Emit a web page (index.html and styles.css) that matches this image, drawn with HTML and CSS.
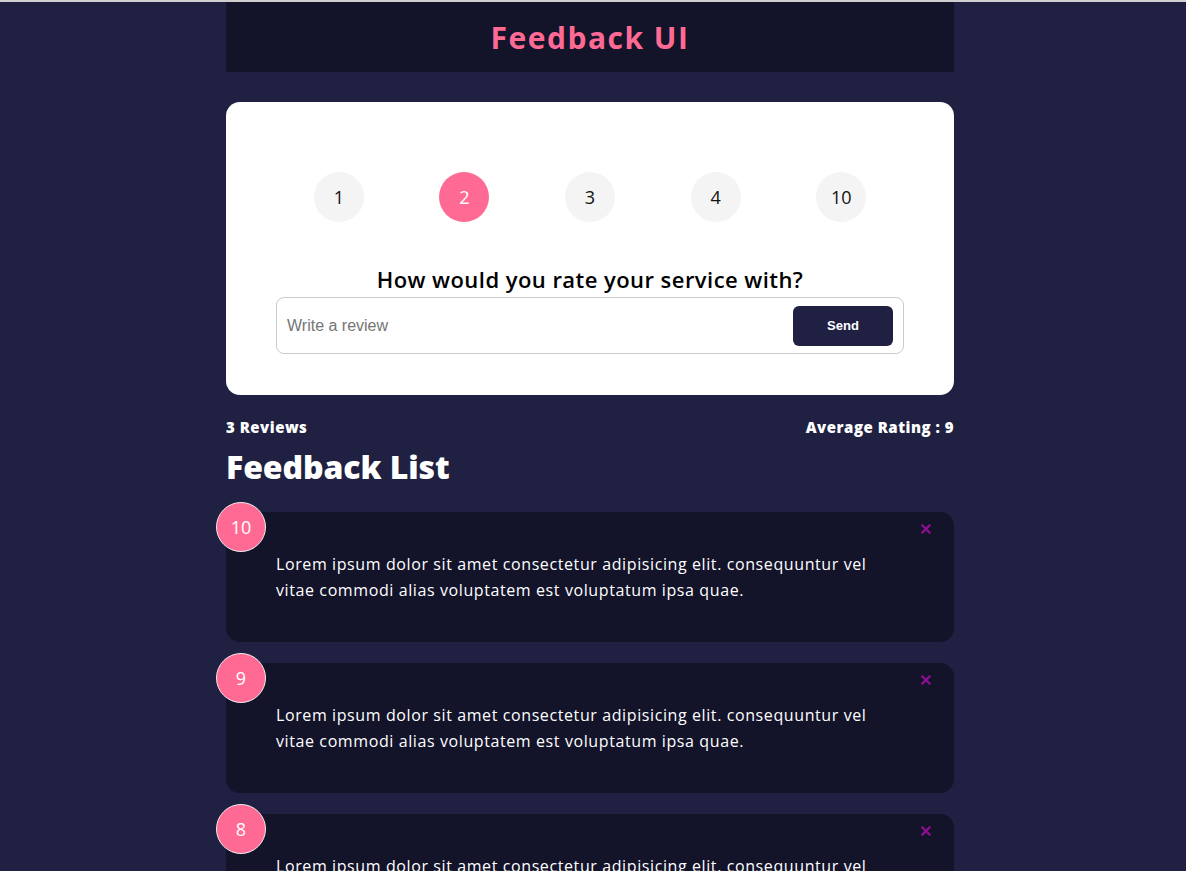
FILE: index.html
```html
<!DOCTYPE html>
<html lang="en">
<head>
<meta charset="utf-8">
<title>Feedback UI</title>
<link rel="stylesheet" href="styles.css">
</head>
<body>
<div class="page">
  <header class="header">
    <h2 class="brand">Feedback UI</h2>
  </header>
  <main class="container">
    <section class="card rating-card">
      <ul class="rating">
        <li class="rate">1</li>
        <li class="rate active">2</li>
        <li class="rate">3</li>
        <li class="rate">4</li>
        <li class="rate">10</li>
      </ul>
      <h2 class="question">How would you rate your service with?</h2>
      <div class="input-group">
        <input class="review" type="text" placeholder="Write a review">
        <button class="send" type="button">Send</button>
      </div>
    </section>

    <div class="stats">
      <h4>3 Reviews</h4>
      <h4>Average Rating : 9</h4>
    </div>
    <h1 class="list-title">Feedback List</h1>

    <div class="feedback">
      <div class="num">10</div>
      <button class="close" type="button" aria-label="delete"><svg viewBox="0 0 10 10" width="10" height="10"><path d="M1.5 1.5 L8.5 8.5 M8.5 1.5 L1.5 8.5" stroke="#8a0f8f" stroke-width="2.4" stroke-linecap="square"/></svg></button>
      <p class="text">Lorem ipsum dolor sit amet consectetur adipisicing elit. consequuntur vel vitae commodi alias voluptatem est voluptatum ipsa quae.</p>
    </div>
    <div class="feedback">
      <div class="num">9</div>
      <button class="close" type="button" aria-label="delete"><svg viewBox="0 0 10 10" width="10" height="10"><path d="M1.5 1.5 L8.5 8.5 M8.5 1.5 L1.5 8.5" stroke="#8a0f8f" stroke-width="2.4" stroke-linecap="square"/></svg></button>
      <p class="text">Lorem ipsum dolor sit amet consectetur adipisicing elit. consequuntur vel vitae commodi alias voluptatem est voluptatum ipsa quae.</p>
    </div>
    <div class="feedback">
      <div class="num">8</div>
      <button class="close" type="button" aria-label="delete"><svg viewBox="0 0 10 10" width="10" height="10"><path d="M1.5 1.5 L8.5 8.5 M8.5 1.5 L1.5 8.5" stroke="#8a0f8f" stroke-width="2.4" stroke-linecap="square"/></svg></button>
      <p class="text">Lorem ipsum dolor sit amet consectetur adipisicing elit. consequuntur vel vitae commodi alias voluptatem est voluptatum ipsa quae.</p>
    </div>
  </main>
</div>
</body>
</html>
```

FILE: styles.css
```css
* { box-sizing: border-box; }

html, body {
  margin: 0;
  padding: 0;
}

body {
  background: #202142;
  color: #fff;
  font-family: "Open Sans", "Noto Sans", sans-serif;
  border-top: 2px solid #cfcfcf;
  overflow: hidden;
  height: 871px;
}

.page {
  width: 1180px;
}

.header {
  width: 728px;
  height: 70px;
  margin: 0 auto;
  background: #13132a;
  display: flex;
  align-items: center;
  justify-content: center;
}

.brand {
  margin: 0;
  color: #ff6a95;
  font-size: 30px;
  font-weight: 700;
  letter-spacing: 1.5px;
}

.container {
  width: 728px;
  margin: 30px auto 0;
}

.card {
  background: #fff;
  color: #000;
  border-radius: 14px;
}

.rating-card {
  padding: 70px 50px 41px;
}

.rating {
  list-style: none;
  margin: 0;
  padding: 0;
  display: flex;
  justify-content: space-around;
}

.rate {
  width: 50px;
  height: 50px;
  border-radius: 50%;
  background: #f4f4f4;
  display: flex;
  align-items: center;
  justify-content: center;
  font-size: 18px;
  color: #111;
}

.rate.active {
  background: #ff6a95;
  color: #fff;
}

.question {
  margin: 44px 0 5px;
  text-align: center;
  font-size: 22px;
  font-weight: 600;
  line-height: 26px;
  letter-spacing: 0.45px;
}

.input-group {
  display: flex;
  align-items: center;
  height: 57px;
  border: 1px solid #ccc;
  border-radius: 8px;
  padding: 0 10px;
}

.review {
  flex: 1;
  border: none;
  outline: none;
  font-family: "Liberation Sans", Arial, sans-serif;
  font-size: 16px;
  color: #333;
  background: transparent;
  padding: 0;
}

.review::placeholder {
  color: #757575;
}

.send {
  width: 100px;
  height: 40px;
  border: none;
  border-radius: 6px;
  background: #202142;
  color: #fff;
  font-family: "Liberation Sans", Arial, sans-serif;
  font-size: 13px;
  font-weight: 700;
}

.stats {
  display: flex;
  justify-content: space-between;
  margin-top: 22px;
}

.stats h4 {
  margin: 0;
  font-size: 15px;
  font-weight: 800;
  line-height: 20px;
  letter-spacing: 0.5px;
}

.list-title {
  margin: 8px 0 23px;
  font-size: 32px;
  font-weight: 800;
  line-height: 44px;
  letter-spacing: -0.1px;
}

.feedback {
  position: relative;
  background: #13132a;
  border-radius: 14px;
  padding: 39px 50px 39px;
  margin-bottom: 21px;
}

.num {
  position: absolute;
  top: -10px;
  left: -10px;
  width: 50px;
  height: 50px;
  border-radius: 50%;
  background: #ff6a95;
  border: 1px solid #eee;
  display: flex;
  align-items: center;
  justify-content: center;
  font-size: 18px;
  color: #fff;
}

.close {
  position: absolute;
  top: 12px;
  right: 23px;
  background: none;
  border: none;
  padding: 0;
  width: 10px;
  height: 10px;
  display: block;
}

.close svg { display: block; }

.text {
  margin: 0;
  font-size: 16px;
  line-height: 26px;
  letter-spacing: 0.6px;
  color: #fff;
}
```
